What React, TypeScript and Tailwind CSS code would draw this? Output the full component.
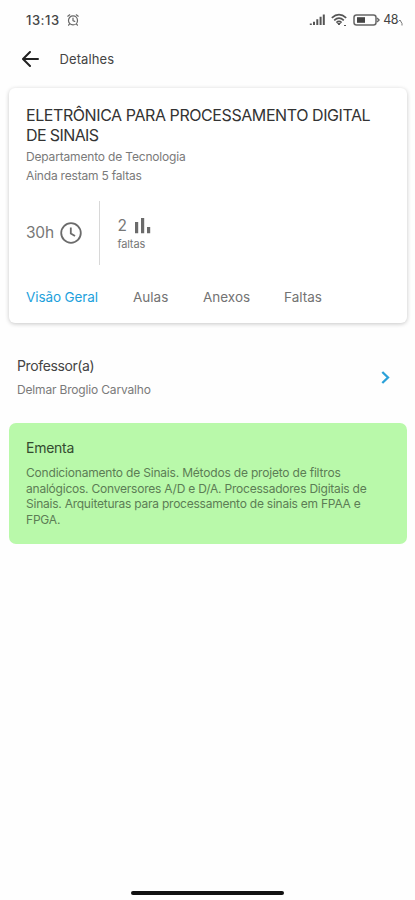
const tabs = [
  { label: "Visão Geral", cls: "w-[107px] text-[#1da1dc] tracking-[-0.1px]" },
  { label: "Aulas", cls: "w-[70px] text-[#737373]" },
  { label: "Anexos", cls: "w-[81px] text-[#737373]" },
  { label: "Faltas", cls: "text-[#737373]" },
];

const ementa = [
  { text: "Condicionamento de Sinais. Métodos de projeto de filtros", cls: "tracking-[-0.19px]" },
  { text: "analógicos. Conversores A/D e D/A. Processadores Digitais de", cls: "tracking-[-0.22px]" },
  { text: "Sinais. Arquiteturas para processamento de sinais em FPAA e", cls: "tracking-[-0.235px]" },
  { text: "FPGA.", cls: "tracking-[-0.2px]" },
];

function StatusBar() {
  return (
    <div className="flex h-[40px] shrink-0 items-center pl-[26px] pr-[12px] text-[#444]">
      <span className="text-[13px] font-medium leading-[16px] tracking-[0.5px]">13:13</span>
      <svg className="ml-[7px]" width="12" height="12" viewBox="0 0 12 12" fill="none" stroke="#666" strokeWidth="1.2" strokeLinecap="round">
        <circle cx="6" cy="6.4" r="4.5" />
        <path d="M.8 2.2 2.7.8M11.2 2.2 9.3.8M6 4v2.7l1.7.7M2.4 10.2l-.8 1M9.6 10.2l.8 1" />
      </svg>
      <div className="flex-1" />
      <svg width="17" height="12" viewBox="0 0 17 12" fill="none" stroke="#555" strokeWidth="2">
        <path d="M1.8 11V9.5M5 11V7.8M8.3 11V5.2M11.6 11V2.8M14.8 11V.4" />
      </svg>
      <svg className="ml-[5px]" width="17" height="14" viewBox="0 0 17 14" fill="none" stroke="#555" strokeWidth="1.7">
        <path d="M.8 4.8Q8-1.6 15.2 4.8M3.2 7.3Q8 3 12.8 7.3M5.4 9.6Q8 7.3 10.6 9.6" />
        <path d="M8 12l-1.4-1.5h2.8zM13 12.5h2" strokeWidth="1" />
      </svg>
      <svg className="ml-[5px]" width="27" height="12" viewBox="0 0 27 12" fill="none" stroke="#666" strokeWidth="1.5">
        <rect x="1" y="1" width="22" height="10" rx="2.5" />
        <rect x="4" y="3.2" width="8" height="5.6" fill="#444" stroke="none" />
        <path d="M24 4l2 2-2 2" />
      </svg>
      <span className="ml-[3px] text-[12.5px] leading-[16px] tracking-[-0.5px]">48</span>
      <svg className="mt-[4px]" width="5" height="7" viewBox="0 0 5 7" fill="none" stroke="#777" strokeWidth="1">
        <path d="M.5 2.5 2 1l2 3.5v2" />
      </svg>
    </div>
  );
}

export default function App() {
  return (
    <div className="flex h-[900px] w-[415px] flex-col overflow-hidden whitespace-nowrap bg-[#fefefe] font-[Inter,sans-serif]">
      <StatusBar />
      <header className="flex h-[38px] shrink-0 items-center pl-[22px]">
        <svg width="17" height="16" viewBox="0 0 17 16" fill="none" stroke="#222" strokeWidth="2" strokeLinecap="round" strokeLinejoin="round">
          <path d="M16 8H1.2M8 1 1 8l7 7" />
        </svg>
        <span className="ml-[20.5px] pt-[2px] text-[13px] tracking-[0.1px] text-[#444]">Detalhes</span>
      </header>
      <section className="ml-[9px] mr-[8px] mt-[10px] flex h-[235px] shrink-0 flex-col rounded-[6px] bg-white px-[17px] shadow-[0_1px_4px_rgba(0,0,0,0.22)]">
        <h1 className="mt-[17px] text-[16px] leading-[20px] text-[#333]">
          <span className="block tracking-[-0.42px]">ELETRÔNICA PARA PROCESSAMENTO DIGITAL</span>
          <span className="block tracking-[-0.6px]">DE SINAIS</span>
        </h1>
        <p className="mt-[2px] text-[12px] leading-[19px] tracking-[-0.17px] text-[#7a7a7a]">Departamento de Tecnologia</p>
        <p className="text-[12px] leading-[19px] tracking-[-0.2px] text-[#7a7a7a]">Ainda restam 5 faltas</p>
        <div className="mt-[16px] flex h-[64px] items-center">
          <span className="text-[15.5px] tracking-[-0.2px] text-[#777]">30h</span>
          <svg className="ml-[6px]" width="22" height="22" viewBox="0 0 22 22" fill="none" stroke="#6b6b6b" strokeWidth="1.8">
            <circle cx="11" cy="11" r="9.8" /><path d="M10.8 5.5v6l4.2 2.6" />
          </svg>
          <div className="ml-[17px] h-full w-px bg-[#d8d8d8]" />
          <div className="ml-[17.5px] flex flex-col">
            <div className="flex h-[22px] items-center">
              <span className="text-[15.5px] text-[#777]">2</span>
              <svg className="ml-[8px]" width="16" height="16" viewBox="0 0 16 16" fill="#6b6b6b">
                <path d="M0 4h3.2v11.3H0zM6 0h3.2v15.3H6zM12 9h3.2v6.3H12z" />
              </svg>
            </div>
            <span className="text-[11px] leading-[14px] tracking-[-0.15px] text-[#777]">faltas</span>
          </div>
        </div>
        <nav className="mt-[23px] flex text-[13.5px] leading-[18px]">
          {tabs.map((t) => (
            <div key={t.label} className={t.cls}>{t.label}</div>
          ))}
        </nav>
      </section>
      <section className="mt-[32px] flex h-[45px] shrink-0 items-center justify-between pl-[17px] pr-[25px]">
        <div>
          <p className="text-[14px] leading-[18px] tracking-[-0.38px] text-[#444]">Professor(a)</p>
          <p className="mt-[7px] text-[12px] leading-[16px] tracking-[-0.17px] text-[#7a7a7a]">Delmar Broglio Carvalho</p>
        </div>
        <svg width="9" height="13" viewBox="0 0 9 13" fill="none" stroke="#2ba1d8" strokeWidth="2.3">
          <path d="M1.3 1 7 6.5 1.3 12" />
        </svg>
      </section>
      <section className="ml-[9px] mr-[8px] mt-[23px] h-[121px] shrink-0 rounded-[7px] bg-[#b9f9aa] px-[17px] pt-[16px]">
        <h2 className="text-[14px] leading-[18px] tracking-[-0.25px] text-[#344b30]">Ementa</h2>
        <div className="mt-[8px] text-[12px] leading-[15.5px] text-[#5c7d55]">
          {ementa.map((l) => (
            <p key={l.text} className={l.cls}>{l.text}</p>
          ))}
        </div>
      </section>
      <div className="mx-auto mb-[5px] mt-auto h-[4px] w-[153px] shrink-0 rounded-full bg-[#111]" />
    </div>
  );
}
